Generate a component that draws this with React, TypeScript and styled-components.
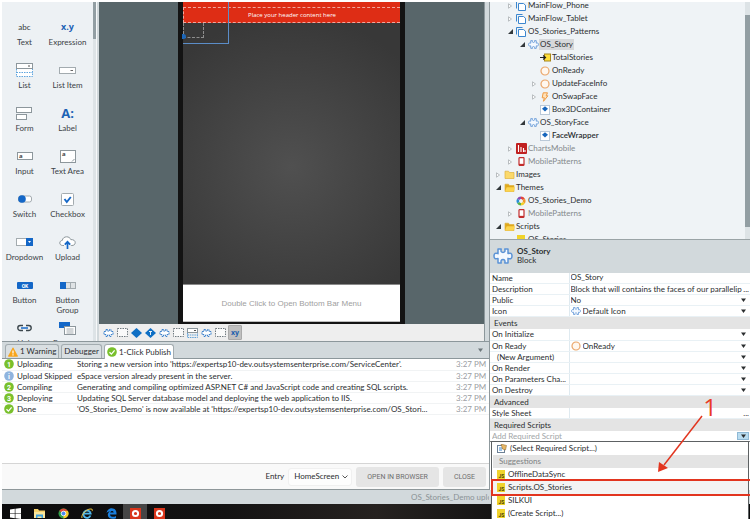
import React from "react";
import styled, { createGlobalStyle } from "styled-components";

const GlobalStyle = createGlobalStyle`
  *, *::before, *::after { box-sizing: border-box; }
  html, body, #root { height: 100%; }
  body {
    margin: 0;
    overflow: hidden;
    background: #fff;
    color: #2b2e30;
    font: 8px/11px Lato, "Open Sans", sans-serif;
  }
  button, input, select { font: inherit; color: inherit; border: 0; margin: 0; padding: 0; background: none; border-radius: 0; }
  select { appearance: none; }
  ul, ol { list-style: none; margin: 0; padding: 0; }
  svg { display: block; flex: none; }
`;

/* ---------- page frame ---------- */

const Page = styled.div`
  display: flex;
  flex-direction: column;
  height: 100vh;
  padding: 2px 0 0 2px;
  overflow: hidden;
`;
const Workspace = styled.div`
  display: flex;
  flex: 1;
  min-height: 0;
  background: #d2d9dc;
`;
const MainColumn = styled.div`
  display: flex;
  flex-direction: column;
  flex: 1;
  min-width: 0;
`;
const Editor = styled.div`
  display: flex;
  flex: 1;
  min-height: 0;
  padding-right: 4px;
`;
const SideColumn = styled.aside`
  display: flex;
  flex-direction: column;
  width: 261px;
  border-left: 1px solid #8f999d;
  position: relative;
  z-index: 2;
`;

/* ---------- widget palette ---------- */

const Palette = styled.nav`
  display: flex;
  width: 94px;
  background: #edf1f4;
  overflow: hidden;
`;
const PaletteGrid = styled.ul`
  display: grid;
  flex: 1;
  grid-template-columns: 1fr 1fr;
  grid-auto-rows: 43px;
  height: 100%;
  margin-top: -28px;
  padding: 0 4px 0 1px;
`;
const PaletteItem = styled.button`
  display: flex;
  flex-direction: column;
  align-items: center;
  width: 100%;
  line-height: 10px;
  color: #3c4246;
  cursor: grab;
`;
const PaletteIcon = styled.span`
  display: flex;
  align-items: center;
  justify-content: center;
  height: 20px;
`;
const ScrollTrack = styled.div<{ $width: number }>`
  flex: none;
  width: ${(p) => p.$width}px;
  background: #dde3e6;
`;
const ScrollThumb = styled.div<{ $top: number; $height: string }>`
  margin-top: ${(p) => p.$top}px;
  height: ${(p) => p.$height};
  background: #929ea3;
`;
const PaletteGutter = styled.div`
  width: 3px;
  background: #d2d9dc;
  border-left: 1px solid #f6f8f9;
`;
const AbcGlyph = styled.span`
  font-size: 8px;
  color: #33383b;
`;
const BlueGlyph = styled.span<{ $size: number }>`
  font: 700 ${(p) => p.$size}px/16px "Open Sans", sans-serif;
  color: #1d62b5;
`;

/* ---------- canvas ---------- */

const CanvasColumn = styled.main`
  display: flex;
  flex-direction: column;
  flex: 1;
  min-width: 0;
  border-right: 1px solid #8c979b;
`;
const Canvas = styled.div`
  display: flex;
  justify-content: center;
  flex: 1;
  min-height: 0;
  background: #58666a;
`;
const Phone = styled.div`
  display: flex;
  flex-direction: column;
  width: 227px;
  border: 5px solid #131313;
  border-width: 0 5px 2px;
  position: relative;
`;
const HeaderBar = styled.header`
  flex: none;
  height: 21px;
  padding-top: 5px;
  background: #de2d15;
`;
const HeaderSlot = styled.div`
  height: 16px;
  border: 1px dashed #f0a79d;
  border-right: 0;
  color: #fff;
  font: 6px/15px "Open Sans", sans-serif;
  text-align: center;
`;
const ScreenBody = styled.div`
  flex: 1;
  background: radial-gradient(circle at 50% 55%, #505050, #383838 85%);
`;
const EmptySlot = styled.div`
  width: 21px;
  height: 15px;
  border: 1px dashed #8d8d8d;
  border-top: 0;
`;
const SelectionFrame = styled.div`
  position: absolute;
  top: 0;
  left: 0;
  width: 46px;
  height: 42px;
  border: 1px solid #5b8dc8;
  border-width: 0 1px 1px 0;
`;
const SelectionHandle = styled.span`
  position: absolute;
  left: -1px;
  top: 32px;
  width: 4px;
  height: 5px;
  border-radius: 0 3px 3px 0;
  background: #1c66b8;
`;
const BottomBar = styled.footer`
  flex: none;
  height: 38px;
  border-top: 1px solid #8a8a8a;
  border-bottom: 1px solid #bdbdbd;
  background: #fff;
  color: #a0a0a0;
  font: 8px/37px "Liberation Sans", sans-serif;
  text-align: center;
`;
const Toolbar = styled.div`
  display: flex;
  align-items: center;
  gap: 2px;
  height: 17px;
  padding-left: 3px;
  background: #eee;
`;
const ToolButton = styled.button<{ $active?: boolean }>`
  display: flex;
  align-items: center;
  justify-content: center;
  width: ${(p) => (p.$active ? 14 : 12)}px;
  height: 15px;
  border: ${(p) => (p.$active ? "1px solid #a9a9a9" : "0")};
  border-radius: 1px;
  background: ${(p) => (p.$active ? "#bfbfbf" : "transparent")};
  color: #1d5fae;
  font: 700 7px/10px "Open Sans", sans-serif;
`;

/* ---------- output panel ---------- */

const Output = styled.section`
  flex: none;
  border-top: 1px solid #8c979b;
  background: #d2d9dc;
`;
const TabStrip = styled.div`
  display: flex;
  align-items: flex-end;
  gap: 2px;
  height: 17px;
  padding: 0 6px 0 3px;
  border-bottom: 1px solid #8c979b;
`;
const Tab = styled.button<{ $selected?: boolean }>`
  display: flex;
  align-items: center;
  gap: 2px;
  height: ${(p) => (p.$selected ? 15 : 14)}px;
  padding: 0 2px;
  border: 1px solid #a3acb0;
  border-bottom: 0;
  border-radius: 3px 3px 0 0;
  background: ${(p) => (p.$selected ? "#fff" : "#d9dfe2")};
  margin-bottom: ${(p) => (p.$selected ? -1 : 0)}px;
`;
const TabMenu = styled.button`
  align-self: center;
  margin-left: auto;
  color: #6d777b;
`;
const LogArea = styled.div`
  height: 104px;
  background: #fff;
`;
const Log = styled.table`
  width: 100%;
  border-collapse: collapse;
  table-layout: fixed;
`;
const LogRow = styled.tr`
  height: 11px;
  td { padding: 0; line-height: 10px; border-bottom: 1px solid #f1f3f4; white-space: nowrap; }
`;
const LogStep = styled.td`
  width: 75px;
`;
const StepLabel = styled.span`
  display: flex;
  align-items: center;
  gap: 3px;
  padding-left: 2px;
`;
const LogTime = styled.td`
  width: 33px;
  color: #9ba0a3;
`;
const Actions = styled.div`
  display: flex;
  align-items: center;
  justify-content: flex-end;
  gap: 4px;
  height: 27px;
  padding-right: 3px;
  border-top: 1px solid #d5d5d5;
  border-bottom: 1px solid #8e979a;
  background: #f9f9f9;
`;
const EntryField = styled.span`
  display: flex;
  align-items: center;
  width: 64px;
  height: 18px;
  padding: 0 3px 0 5px;
  border: 1px solid #f0f0f0;
  border-radius: 3px;
  background: #fdfdfd;
`;
const EntrySelect = styled.select`
  flex: 1;
  min-width: 0;
`;
const ActionButton = styled.button`
  height: 20px;
  padding: 0 11px;
  border-radius: 3px;
  background: #e5e5e5;
  color: #6e6e6e;
  font: 7px/20px Roboto, sans-serif;
`;

/* ---------- element tree ---------- */

const TreePane = styled.section`
  display: flex;
  flex: 1;
  min-height: 0;
  overflow: hidden;
  background: #eff3f6;
`;
const Tree = styled.ul`
  flex: 1;
  min-width: 0;
  margin-top: -3px;
`;
const TreeRow = styled.li<{ $depth: number; $muted?: boolean; $strong?: boolean }>`
  display: flex;
  align-items: center;
  height: 13px;
  padding-left: ${(p) => 6 + p.$depth * 12}px;
  color: ${(p) => (p.$muted ? "#84898c" : "#2b2e30")};
  font-weight: ${(p) => (p.$strong ? 600 : 400)};
`;
const Twisty = styled.span`
  width: 7px;
`;
const TreeIcon = styled.span`
  display: flex;
  justify-content: center;
  width: 12px;
`;
const TreeLabel = styled.span<{ $selected?: boolean }>`
  padding: 0 1px;
  background: ${(p) => (p.$selected ? "#d6d8da" : "transparent")};
`;

/* ---------- properties ---------- */

const Inspector = styled.section`
  flex: none;
  background: #fff;
  position: relative;
`;
const InspectorHead = styled.header`
  display: flex;
  align-items: center;
  gap: 4px;
  height: 34px;
  padding: 0 3px;
  border-top: 1px solid #9aa3a6;
  background: #d2d9dc;
  line-height: 9px;
`;
const InspectorTitle = styled.h2`
  margin: 0;
  font-size: 8px;
  line-height: 9px;
`;
const PropTable = styled.table`
  width: 100%;
  border-collapse: collapse;
  table-layout: fixed;
`;
const PropRow = styled.tr`
  height: 11px;
`;
const PropName = styled.th<{ $indent?: boolean }>`
  width: 79px;
  padding: 0 0 0 ${(p) => (p.$indent ? 7 : 2)}px;
  border-right: 1px solid #dfeaf0;
  border-bottom: 1px solid #e9f1f5;
  font-weight: 400;
  line-height: 10px;
  text-align: left;
  white-space: nowrap;
`;
const PropValue = styled.td`
  padding: 0;
  border-bottom: 1px solid #e9f1f5;
`;
const ValueLine = styled.div<{ $tight?: boolean }>`
  display: flex;
  align-items: center;
  gap: ${(p) => (p.$tight ? 0 : 2)}px;
  height: 10px;
  padding: 0 ${(p) => (p.$tight ? 1 : 4)}px 0 1px;
`;
const ValueInput = styled.input`
  flex: 1;
  width: 0;
  height: 10px;
  text-overflow: clip;
`;
const ValueSelect = styled.select`
  flex: 1;
  width: 0;
  height: 10px;
`;
const MoreButton = styled.button`
  line-height: 10px;
`;
const GroupRow = styled.tr`
  height: 12px;
  th { padding: 0 0 0 4px; background: #e4e4e4; font-weight: 400; line-height: 12px; text-align: left; }
`;
const AddRow = styled.div`
  display: flex;
  align-items: center;
  height: 11px;
  padding-left: 2px;
  border-bottom: 1px solid #7b7f82;
`;
const AddInput = styled.input`
  flex: 1;
  width: 0;
  height: 10px;
  &::placeholder { color: #a2a6a8; opacity: 1; }
`;
const AddToggle = styled.button`
  display: flex;
  align-items: center;
  justify-content: center;
  width: 12px;
  height: 8px;
  margin-right: 1px;
  border: 1px solid #8fb9d6;
  background: #b9dcf0;
`;
const PanelFill = styled.div`
  height: 48px;
`;
const Popup = styled.ul`
  position: absolute;
  top: 202px;
  left: 1px;
  right: 1px;
  padding: 0 0 8px 1px;
  border: 1px solid #5d6163;
  background: #fff;
`;
const PopupHeading = styled.li`
  height: 13px;
  padding-left: 6px;
  background: #e4e4e4;
  color: #7d8183;
  line-height: 13px;
`;
const PopupOption = styled.button<{ $marked?: boolean }>`
  display: flex;
  align-items: center;
  gap: 3px;
  width: 100%;
  height: 13px;
  padding-left: 4px;
  background: ${(p) => (p.$marked ? "#f3f3f3" : "transparent")};
`;
const MarkFrame = styled.span`
  position: absolute;
  top: 37px;
  left: -1px;
  right: -4px;
  height: 17px;
  border: 2px solid #e2351f;
`;
const Note = styled.svg`
  position: absolute;
  right: 42px;
  top: 157px;
`;
const NoteNumber = styled.span`
  position: absolute;
  right: 33px;
  top: 156px;
  color: #ea3a24;
  font: 24px/24px "Open Sans", sans-serif;
`;

/* ---------- status and task bar ---------- */

const StatusBar = styled.div`
  display: flex;
  height: 14px;
  padding: 0 261px 0 409px;
  background: #d2d9dc;
  color: #8b9396;
  line-height: 14px;
  white-space: nowrap;
`;
const StatusText = styled.span`
  flex: 1;
  min-width: 0;
  overflow: hidden;
`;
const Taskbar = styled.nav`
  display: flex;
  height: 15px;
  padding-left: 1px;
  background: linear-gradient(90deg, #0b0b0c, #141313 30%, #262220 50%, #111 70%, #0a0a0a);
  overflow: hidden;
`;
const TaskButton = styled.button<{ $active?: boolean }>`
  display: flex;
  justify-content: center;
  width: 24px;
  height: 15px;
  padding-top: 4px;
  background: ${(p) => (p.$active ? "#454545" : "transparent")};
`;

/* ---------- icons ---------- */

const BLUE = "#1766bd";

const Caret = () => (
  <svg width="5" height="4" viewBox="0 0 5 4"><path d="M0 0.5h5L2.5 4z" fill="currentColor" /></svg>
);

const BlockIcon = ({ size = 11 }: { size?: number }) => (
  <svg width={size} height={size} viewBox="0 0 20 20">
    <path
      d="M5 3h3.2c-.6 2.6.2 3.4 1.8 3.4S12.400 5.600 11.800 3H15v4.600c2.500-1 4-.2 4 2.400s-1.500 3.400-4 2.400V17h-3.200c.6-2.600-.2-3.400-1.800-3.400S7.600 14.400 8.200 17H5v-4.600c-2.500 1-4 .2-4-2.400s1.500-3.400 4-2.400z"
      fill="#f4f9ff" stroke="#5b93d6" strokeWidth="1.500" strokeLinejoin="round"
    />
  </svg>
);

const FlowIcon = () => (
  <svg width="10" height="10" viewBox="0 0 10 10">
    <path d="M.5 7.500V.5h6" fill="none" stroke="#3b86cf" strokeWidth="1" />
    <path d="M2.500 2.500h5L9.500 4.200V9.500h-7z" fill="#fff" stroke="#3b86cf" />
  </svg>
);

const RingIcon = () => (
  <svg width="10" height="10" viewBox="0 0 10 10"><circle cx="5" cy="5" r="4" fill="#fff7ee" stroke="#eaa66a" strokeWidth="1.200" /></svg>
);

const InputParamIcon = () => (
  <svg width="11" height="9" viewBox="0 0 11 9">
    <rect x="4.500" y="1" width="6" height="7" fill="#ffdf3c" stroke="#a8871b" />
    <path d="M0 4.500h5M3.200 2.500l2.300 2-2.300 2" fill="none" stroke="#222" strokeWidth="1.200" />
  </svg>
);

const EventIcon = () => (
  <svg width="8" height="10" viewBox="0 0 8 10"><path d="M2.200.8h4.300L5.200 3.800h1.700L2.500 9.300 3.300 5.800H1.200z" fill="#ffe2ba" stroke="#ee9a42" strokeWidth="1" /></svg>
);

const ContainerIcon = () => (
  <svg width="10" height="10" viewBox="0 0 10 10">
    <rect x=".5" y=".5" width="9" height="9" fill="#fff" stroke="#7d98b5" strokeDasharray="1 1" />
    <path d="M5 1.200l3 2.600-3 2.700-3-2.700z" fill={BLUE} />
  </svg>
);

const ChartsIcon = () => (
  <svg width="11" height="11" viewBox="0 0 11 11">
    <rect width="11" height="11" rx="1" fill="#c01f1f" />
    <path d="M2.500 2v7M5 4v5M7.500 5v4M9 7v2" stroke="#fff" strokeWidth="1.100" />
  </svg>
);

const MobileIcon = () => (
  <svg width="7" height="9" viewBox="0 0 7 9">
    <rect x="1" y=".700" width="5" height="7.600" rx=".5" fill="#fff" stroke="#c22d2d" strokeWidth="1.200" />
    <path d="M1 7.500h5" stroke="#c22d2d" strokeWidth="1.300" />
  </svg>
);

const FolderIcon = ({ open }: { open?: boolean }) => (
  <svg width="11" height="9" viewBox="0 0 11 9">
    <path d="M1 8.500V1.200h3.500l1 1.300h4.500v6z" fill={open ? "#e0a91c" : "#fbd96b"} stroke="#dfb23c" strokeWidth=".7" />
    {open && <path d="M1 8.500l1.700-4.300H11L9.500 8.500z" fill="#fcd44e" />}
  </svg>
);

const WheelIcon = () => {
  const tones = ["#e2453a", "#f19a2c", "#f2cf2d", "#57b249", "#2a8fd6", "#8a4db5"];
  return (
    <svg width="10" height="10" viewBox="-5 -5 10 10">
      {tones.map((tone, i) => (
        <path key={tone} d="M0-3.200A3.200 3.200 0 0 1 2.770-1.600" transform={`rotate(${i * 60})`} fill="none" stroke={tone} strokeWidth="2.600" />
      ))}
    </svg>
  );
};

const JsIcon = () => (
  <svg width="8" height="9" viewBox="0 0 8 9">
    <rect width="8" height="9" fill="#f0d32c" />
    <text x="1.500" y="8" fontSize="5" fontWeight="700" fontFamily="Roboto" fill="#4b4208">JS</text>
  </svg>
);

const PickIcon = () => (
  <svg width="10" height="9" viewBox="0 0 10 9">
    <rect x=".5" y="1.500" width="7" height="7" fill="#fff" stroke="#6d8196" />
    <path d="M2 4h4M2 6h3" stroke="#3b86cf" />
    <path d="M4 0l5.500 1.500-1 4.500-3-1z" fill="#e8b868" stroke="#8b6222" strokeWidth=".5" />
  </svg>
);

const StepIcon = ({ mark, tone = "#79c02c", size = 10 }: { mark: string; tone?: string; size?: number }) => (
  <svg width={size} height={size} viewBox="0 0 10 10">
    <circle cx="5" cy="5" r="4.800" fill={tone} />
    {mark === "ok"
      ? <path d="M2.500 5.200l1.900 1.900 3.200-3.700" fill="none" stroke="#fff" strokeWidth="1.300" />
      : <text x="5" y="7.500" textAnchor="middle" fontSize="7" fontWeight="700" fontFamily="Roboto" fill="#fff">{mark}</text>}
  </svg>
);

const WarningIcon = () => (
  <svg width="10" height="10" viewBox="0 0 10 10">
    <path d="M5 .8L9.600 9.300H.4z" fill="#f8a51b" stroke="#f8a51b" strokeLinejoin="round" strokeWidth=".8" />
    <path d="M5 3.500v3M5 7.300v1.200" stroke="#fff" strokeWidth="1.200" />
  </svg>
);

const PuzzleTool = () => (
  <svg width="11" height="10" viewBox="0 0 11 10"><path d="M3 1.500h1.500v1.500h2V1.500H8v2h2v3H8v2H6.500V7h-2v1.500H3v-2H1v-3h2z" fill="#fff" stroke="#3f83cc" strokeDasharray="2 .6" /></svg>
);
const BoxTool = () => (
  <svg width="11" height="9" viewBox="0 0 11 9"><rect x=".5" y=".5" width="10" height="8" fill="#fafafa" stroke="#707a80" strokeDasharray="1.500 1" /></svg>
);
const DiamondTool = ({ mark }: { mark?: boolean }) => (
  <svg width="11" height="10" viewBox="0 0 11 10">
    <path d="M5.500 0L11 5l-5.500 5L0 5z" fill="#0f6fc4" />
    {mark && <path d="M4 3.500h3M5.500 3.500v3.500" stroke="#fff" strokeWidth=".9" />}
  </svg>
);
const ListTool = () => (
  <svg width="11" height="10" viewBox="0 0 11 10">
    <rect x=".5" y=".5" width="10" height="4" fill="#fff" stroke="#8a959b" />
    <path d="M7 2.500h2" stroke="#555" />
    <path d="M.5 5v4.500h10V5M.5 7h10" fill="none" stroke="#64a3d8" strokeDasharray="1.500 .8" />
  </svg>
);

const WIDGETS: Record<string, React.ReactNode> = {
  list: (
    <svg width="17" height="14" viewBox="0 0 17 14">
      <rect x=".5" y=".5" width="16" height="5" fill="#fff" stroke="#8d979c" />
      <path d="M12 3h2" stroke="#555" />
      <path d="M.5 6v7.500h16V6M.5 9.500h16" fill="#fff" stroke="#5fa5de" strokeDasharray="1.500 1" />
    </svg>
  ),
  listItem: (
    <svg width="17" height="7" viewBox="0 0 17 7">
      <rect x=".5" y=".5" width="16" height="6" fill="#fff" stroke="#a3abaf" />
      <path d="M11.500 3.500h2.500" stroke="#666" />
    </svg>
  ),
  form: (
    <svg width="17" height="13" viewBox="0 0 17 13">
      <rect x=".5" y=".5" width="15" height="5" fill="#fff" stroke="#8d979c" />
      <rect x=".5" y="7.500" width="10" height="5" fill="#fff" stroke="#8d979c" />
    </svg>
  ),
  input: (
    <svg width="16" height="8" viewBox="0 0 16 8">
      <rect x=".5" y=".5" width="15" height="7" fill="#fff" stroke="#8d979c" />
      <text x="2" y="6" fontSize="6" fontWeight="700" fontFamily="Open Sans" fill="#444">a</text>
    </svg>
  ),
  textArea: (
    <svg width="16" height="13" viewBox="0 0 16 13">
      <rect x=".5" y=".5" width="15" height="12" fill="#fff" stroke="#8d979c" />
      <text x="2" y="6" fontSize="6" fontWeight="700" fontFamily="Open Sans" fill="#444">a</text>
      <path d="M12 11.500l2.500-2.500" stroke="#8d979c" />
    </svg>
  ),
  switch: (
    <svg width="14" height="8" viewBox="0 0 14 8">
      <rect x=".5" y="1" width="13" height="6" rx="2" fill="#fff" stroke="#a3abaf" />
      <circle cx="4" cy="4" r="3.800" fill="#1467c7" />
    </svg>
  ),
  checkbox: (
    <svg width="13" height="13" viewBox="0 0 13 13">
      <rect x=".5" y=".5" width="12" height="12" rx="1" fill="#fff" stroke="#a3abaf" />
      <path d="M3.500 6l2.300 3 4-5" fill="none" stroke="#1467c7" strokeWidth="1.900" />
    </svg>
  ),
  dropdown: (
    <svg width="17" height="8" viewBox="0 0 17 8">
      <rect x=".5" y=".5" width="16" height="7" fill="#fff" stroke="#a3abaf" />
      <rect x="10" width="7" height="8" fill="#1467c7" />
      <path d="M12 3h3l-1.500 2z" fill="#fff" />
    </svg>
  ),
  upload: (
    <svg width="17" height="13" viewBox="0 0 17 13">
      <path d="M5 9.500H3.800C2 9.500.8 8.500.8 7s1-2.400 2.500-2.600C3.500 2.200 5.500.8 7.600.8c2 0 3.500 1 4.200 2.800 2.600-.2 4.400 1 4.400 3s-1.400 2.900-3.400 2.900h-1" fill="#fff" stroke="#8d979c" />
      <path d="M8.500 13V6.500M5.800 8.700l2.700-2.900 2.700 2.900" fill="none" stroke="#1467c7" strokeWidth="1.700" />
    </svg>
  ),
  button: (
    <svg width="16" height="7" viewBox="0 0 16 7">
      <rect width="16" height="7" rx="1" fill="#1467c7" />
      <text x="8" y="5.500" textAnchor="middle" fontSize="5" fontWeight="700" fontFamily="Roboto" fill="#fff">OK</text>
    </svg>
  ),
  buttonGroup: (
    <svg width="16" height="7" viewBox="0 0 16 7">
      <rect x=".5" y=".5" width="15" height="6" fill="#dfe3e5" stroke="#a3abaf" />
      <rect width="6" height="7" fill="#1467c7" />
      <path d="M10.500 0v7" stroke="#a3abaf" />
    </svg>
  ),
  link: (
    <svg width="17" height="8" viewBox="0 0 17 8">
      <path d="M7 1.500H4.300a2.500 2.500 0 0 0 0 5H7M10 1.500h2.700a2.500 2.500 0 0 1 0 5H10" fill="none" stroke="#3c474d" strokeWidth="1.400" />
      <path d="M5 4h7" stroke="#1467c7" strokeWidth="1.500" />
    </svg>
  ),
  popover: (
    <svg width="17" height="13" viewBox="0 0 17 13">
      <rect width="11" height="6" fill="#1467c7" />
      <rect x="5.500" y="4.500" width="11" height="8" fill="#fff" stroke="#8d979c" />
      <path d="M7.500 7h7M7.500 9h7M7.500 11h7" stroke="#8d979c" strokeWidth=".8" />
    </svg>
  ),
};

/* ---------- data ---------- */

const palette: { label: string; icon: React.ReactNode }[] = [
  { label: "Container", icon: null },
  { label: "If", icon: null },
  { label: "Text", icon: <AbcGlyph>abc</AbcGlyph> },
  { label: "Expression", icon: <BlueGlyph $size={9}>x.y</BlueGlyph> },
  { label: "List", icon: WIDGETS.list },
  { label: "List Item", icon: WIDGETS.listItem },
  { label: "Form", icon: WIDGETS.form },
  { label: "Label", icon: <BlueGlyph $size={13}>A:</BlueGlyph> },
  { label: "Input", icon: WIDGETS.input },
  { label: "Text Area", icon: WIDGETS.textArea },
  { label: "Switch", icon: WIDGETS.switch },
  { label: "Checkbox", icon: WIDGETS.checkbox },
  { label: "Dropdown", icon: WIDGETS.dropdown },
  { label: "Upload", icon: WIDGETS.upload },
  { label: "Button", icon: WIDGETS.button },
  { label: "Button Group", icon: WIDGETS.buttonGroup },
  { label: "Link", icon: WIDGETS.link },
  { label: "Popover", icon: WIDGETS.popover },
];

type Node = { label: string; depth: number; icon: React.ReactNode; open?: boolean; muted?: boolean; selected?: boolean; strong?: boolean };
const tree: Node[] = [
  { label: "MainFlow_Phone", depth: 1, icon: <FlowIcon />, open: false },
  { label: "MainFlow_Tablet", depth: 1, icon: <FlowIcon />, open: false },
  { label: "OS_Stories_Patterns", depth: 1, icon: <FlowIcon />, open: true },
  { label: "OS_Story", depth: 2, icon: <BlockIcon />, open: true, selected: true },
  { label: "TotalStories", depth: 3, icon: <InputParamIcon /> },
  { label: "OnReady", depth: 3, icon: <RingIcon /> },
  { label: "UpdateFaceInfo", depth: 3, icon: <RingIcon />, open: false },
  { label: "OnSwapFace", depth: 3, icon: <EventIcon />, open: false },
  { label: "Box3DContainer", depth: 3, icon: <ContainerIcon /> },
  { label: "OS_StoryFace", depth: 2, icon: <BlockIcon />, open: true },
  { label: "FaceWrapper", depth: 3, icon: <ContainerIcon />, strong: true },
  { label: "ChartsMobile", depth: 1, icon: <ChartsIcon />, open: false, muted: true },
  { label: "MobilePatterns", depth: 1, icon: <MobileIcon />, open: false, muted: true },
  { label: "Images", depth: 0, icon: <FolderIcon />, open: false },
  { label: "Themes", depth: 0, icon: <FolderIcon open />, open: true },
  { label: "OS_Stories_Demo", depth: 1, icon: <WheelIcon /> },
  { label: "MobilePatterns", depth: 1, icon: <MobileIcon />, open: false, muted: true },
  { label: "Scripts", depth: 0, icon: <FolderIcon open />, open: true },
  { label: "OS_Stories", depth: 1, icon: <JsIcon /> },
];

const log = [
  { icon: <StepIcon mark="1" />, step: "Uploading", text: "Storing a new version into 'https://expertsp10-dev.outsystemsenterprise.com/ServiceCenter'.", time: "3:27 PM" },
  { icon: <StepIcon mark="i" tone="#8fb4de" />, step: "Upload Skipped", text: "eSpace version already present in the server.", time: "3:27 PM" },
  { icon: <StepIcon mark="2" />, step: "Compiling", text: "Generating and compiling optimized ASP.NET C# and JavaScript code and creating SQL scripts.", time: "3:27 PM" },
  { icon: <StepIcon mark="3" />, step: "Deploying", text: "Updating SQL Server database model and deploying the web application to IIS.", time: "3:27 PM" },
  { icon: <StepIcon mark="ok" />, step: "Done", text: "'OS_Stories_Demo' is now available at 'https://expertsp10-dev.outsystemsenterprise.com/OS_Stori...", time: "3:27 PM" },
];

type Prop = { name: string; kind: "group" | "text" | "more" | "select"; value?: string; icon?: React.ReactNode; indent?: boolean };
const props: Prop[] = [
  { name: "Name", kind: "text", value: "OS_Story" },
  { name: "Description", kind: "more", value: "Block that will contains the faces of our parallelip" },
  { name: "Public", kind: "select", value: "No" },
  { name: "Icon", kind: "select", value: "Default Icon", icon: <BlockIcon size={10} /> },
  { name: "Events", kind: "group" },
  { name: "On Initialize", kind: "select" },
  { name: "On Ready", kind: "select", value: "OnReady", icon: <RingIcon /> },
  { name: "(New Argument)", kind: "select", indent: true },
  { name: "On Render", kind: "select" },
  { name: "On Parameters Cha...", kind: "select" },
  { name: "On Destroy", kind: "select" },
  { name: "Advanced", kind: "group" },
  { name: "Style Sheet", kind: "more", value: "" },
  { name: "Required Scripts", kind: "group" },
];

const scripts = [
  { label: "OfflineDataSync" },
  { label: "Scripts.OS_Stories", marked: true },
  { label: "SILKUI" },
  { label: "(Create Script...)" },
];

/* ---------- parts ---------- */

const Expander = ({ open }: { open?: boolean }) => (
  <Twisty>
    {open === true && <svg width="5" height="5" viewBox="0 0 5 5"><path d="M5 0v5H0z" fill="#33383b" /></svg>}
    {open === false && <svg width="4" height="6" viewBox="0 0 4 6"><path d="M.5 .8L3.500 3 .5 5.200z" fill="#fff" stroke="#a9afb2" strokeWidth=".8" /></svg>}
  </Twisty>
);

const PropertyRow = ({ prop }: { prop: Prop }) => {
  if (prop.kind === "group") {
    return <GroupRow><th colSpan={2} scope="colgroup">{prop.name}</th></GroupRow>;
  }
  return (
    <PropRow>
      <PropName scope="row" $indent={prop.indent}>{prop.name}</PropName>
      <PropValue>
        <ValueLine $tight={prop.kind === "more"}>
          {prop.icon}
          {prop.kind === "select" ? (
            <>
              <ValueSelect aria-label={prop.name}><option>{prop.value ?? ""}</option></ValueSelect>
              <Caret />
            </>
          ) : (
            <ValueInput aria-label={prop.name} defaultValue={prop.value} />
          )}
          {prop.kind === "more" && <MoreButton aria-label={`Edit ${prop.name}`}>...</MoreButton>}
        </ValueLine>
      </PropValue>
    </PropRow>
  );
};

const OutSystemsIcon = () => (
  <svg width="11" height="11" viewBox="0 0 11 11">
    <rect width="11" height="11" fill="#d9361c" />
    <circle cx="5.500" cy="5.500" r="2.600" fill="none" stroke="#fff" strokeWidth="2" />
  </svg>
);

const taskIcons: { name: string; active?: boolean; icon: React.ReactNode }[] = [
  { name: "Start", icon: <svg width="11" height="11" viewBox="0 0 11 11"><path d="M0 1.500L4.800.8V5.200H0zM5.400.7L11 0v5.200H5.400zM0 5.800h4.800v4.400L0 9.500zM5.400 5.800H11V11l-5.600-.7z" fill="#fff" /></svg> },
  { name: "File Explorer", icon: <svg width="11" height="11" viewBox="0 0 11 11"><path d="M0 1h4l1 1.500h6V10H0z" fill="#f6d26b" /><path d="M0 4h11v6H0z" fill="#fbe69b" /><path d="M2 10V6.500h7V10H7.500V8.500h-4V10z" fill="#3b9fdd" /></svg> },
  { name: "Chrome", icon: (
    <svg width="11" height="11" viewBox="0 0 11 11">
      <circle cx="5.500" cy="5.500" r="5" fill="#2f9e48" />
      <path d="M9.900 3A5 5 0 0 1 5.500 10.500L5.500 5.500V3z" fill="#f6c92b" />
      <path d="M1.200 3L5.500 5.500V3h4.400A5 5 0 0 0 1.200 3z" fill="#dd4b39" />
      <circle cx="5.500" cy="5.500" r="2.300" fill="#4a8af4" stroke="#fff" strokeWidth=".8" />
    </svg>) },
  { name: "Internet Explorer", icon: (
    <svg width="12" height="11" viewBox="0 0 12 11">
      <path d="M9.500 7.500A3.700 3.700 0 1 1 9.700 5.700H3" fill="none" stroke="#4cb5ec" strokeWidth="1.800" />
      <path d="M1 10C-.5 7.500 6-.5 11 1.200c.7.500.4 1.300 0 2" fill="none" stroke="#f1c640" strokeWidth="1" />
    </svg>) },
  { name: "Edge", icon: (
    <svg width="11" height="11" viewBox="0 0 11 11">
      <path d="M.5 5C1 1.800 3.300.2 5.800.2 8.800.2 10.500 2.500 10.500 5v1.500H4c.2 2.500 3.500 3 6 1.500v2.200C5.500 12 1.500 10 1.800 6.500 2 4.800 3 3.700 4.300 3.200 2.800 3.300 1.500 3.900.5 5zM4.200 4.600h3.500c0-2.200-3.200-2.200-3.500 0z" fill="#1b7fdc" fillRule="evenodd" />
    </svg>) },
  { name: "OutSystems Studio", active: true, icon: <OutSystemsIcon /> },
  { name: "OutSystems", icon: <OutSystemsIcon /> },
];

const tools: { name: string; icon: React.ReactNode }[] = [
  { name: "Block", icon: <PuzzleTool /> },
  { name: "Container", icon: <BoxTool /> },
  { name: "If", icon: <DiamondTool /> },
  { name: "If true", icon: <DiamondTool mark /> },
  { name: "Nested block", icon: <PuzzleTool /> },
  { name: "Nested container", icon: <BoxTool /> },
  { name: "List", icon: <ListTool /> },
  { name: "Web block", icon: <PuzzleTool /> },
  { name: "Placeholder", icon: <BoxTool /> },
];

export default function App() {
  return (
    <Page>
      <GlobalStyle />
      <Workspace>
        <MainColumn>
          <Editor>
            <Palette aria-label="Widgets">
              <PaletteGrid>
                {palette.map((item) => (
                  <li key={item.label}>
                    <PaletteItem>
                      <PaletteIcon>{item.icon}</PaletteIcon>
                      {item.label}
                    </PaletteItem>
                  </li>
                ))}
              </PaletteGrid>
              <ScrollTrack $width={3}><ScrollThumb $top={0} $height="37px" /></ScrollTrack>
            </Palette>
            <PaletteGutter />
            <CanvasColumn>
              <Canvas>
                <Phone>
                  <HeaderBar><HeaderSlot>Place your header content here</HeaderSlot></HeaderBar>
                  <ScreenBody><EmptySlot /></ScreenBody>
                  <BottomBar>Double Click to Open Bottom Bar Menu</BottomBar>
                  <SelectionFrame><SelectionHandle /></SelectionFrame>
                </Phone>
              </Canvas>
              <Toolbar>
                {tools.map((tool) => <ToolButton key={tool.name} aria-label={tool.name}>{tool.icon}</ToolButton>)}
                <ToolButton $active>xy</ToolButton>
              </Toolbar>
            </CanvasColumn>
          </Editor>
          <Output>
            <TabStrip>
              <Tab><WarningIcon />1 Warning</Tab>
              <Tab>Debugger</Tab>
              <Tab $selected><StepIcon mark="ok" />1-Click Publish</Tab>
              <TabMenu aria-label="Panel menu"><Caret /></TabMenu>
            </TabStrip>
            <LogArea>
              <Log>
                <tbody>
                  {log.map((row) => (
                    <LogRow key={row.step}>
                      <LogStep><StepLabel>{row.icon}{row.step}</StepLabel></LogStep>
                      <td>{row.text}</td>
                      <LogTime>{row.time}</LogTime>
                    </LogRow>
                  ))}
                </tbody>
              </Log>
            </LogArea>
            <Actions>
              <label htmlFor="entry">Entry</label>
              <EntryField>
                <EntrySelect id="entry"><option>HomeScreen</option></EntrySelect>
                <svg width="6" height="4" viewBox="0 0 6 4"><path d="M.5.5L3 3 5.500.5" fill="none" stroke="#555" /></svg>
              </EntryField>
              <ActionButton>OPEN IN BROWSER</ActionButton>
              <ActionButton>CLOSE</ActionButton>
            </Actions>
          </Output>
        </MainColumn>
        <SideColumn>
          <TreePane>
            <Tree>
              {tree.map((node, i) => (
                <TreeRow key={i} $depth={node.depth} $muted={node.muted} $strong={node.strong}>
                  <Expander open={node.open} />
                  <TreeIcon>{node.icon}</TreeIcon>
                  <TreeLabel $selected={node.selected}>{node.label}</TreeLabel>
                </TreeRow>
              ))}
            </Tree>
            <ScrollTrack $width={5}><ScrollThumb $top={13} $height="212px" /></ScrollTrack>
          </TreePane>
          <Inspector>
            <InspectorHead>
              <BlockIcon size={20} />
              <div><InspectorTitle>OS_Story</InspectorTitle>Block</div>
            </InspectorHead>
            <PropTable>
              <colgroup><col width="79" /><col /></colgroup>
              <tbody>{props.map((prop) => <PropertyRow key={prop.name} prop={prop} />)}</tbody>
            </PropTable>
            <AddRow>
              <AddInput aria-label="Add Required Script" placeholder="Add Required Script" />
              <AddToggle aria-label="Show scripts"><Caret /></AddToggle>
            </AddRow>
            <PanelFill />
            <Popup>
              <li><PopupOption><PickIcon />(Select Required Script...)</PopupOption></li>
              <PopupHeading>Suggestions</PopupHeading>
              {scripts.map((script) => (
                <li key={script.label}>
                  <PopupOption $marked={script.marked}><JsIcon />{script.label}</PopupOption>
                </li>
              ))}
              <MarkFrame />
            </Popup>
            <Note width="50" height="78" viewBox="0 0 50 78">
              <path d="M44 20L6 69" stroke="#e2351f" strokeWidth="1.500" />
              <path d="M0 76l1-10 9 6z" fill="#e2351f" />
            </Note>
            <NoteNumber>1</NoteNumber>
          </Inspector>
        </SideColumn>
      </Workspace>
      <StatusBar><StatusText>OS_Stories_Demo uploaded</StatusText></StatusBar>
      <Taskbar aria-label="Taskbar">
        {taskIcons.map((task) => <TaskButton key={task.name} aria-label={task.name} $active={task.active}>{task.icon}</TaskButton>)}
      </Taskbar>
    </Page>
  );
}
